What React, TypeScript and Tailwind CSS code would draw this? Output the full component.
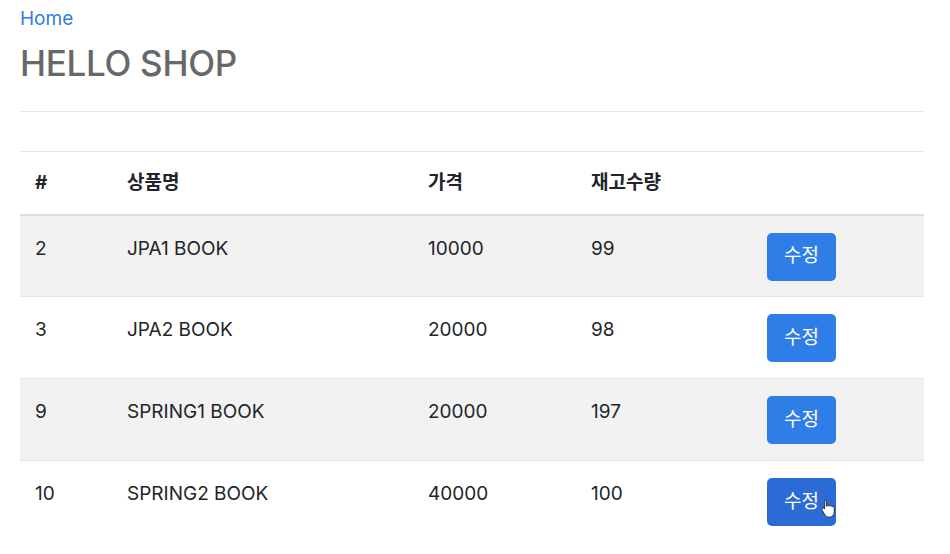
import React from "react";

const rows = [
  { id: "2", name: "JPA1 BOOK", price: "10000", qty: "99" },
  { id: "3", name: "JPA2 BOOK", price: "20000", qty: "98" },
  { id: "9", name: "SPRING1 BOOK", price: "20000", qty: "197" },
  { id: "10", name: "SPRING2 BOOK", price: "40000", qty: "100" },
];

export default function App() {
  return (
    <div
      className="w-[950px] h-[554px] bg-white overflow-hidden text-[#212529]"
      style={{ fontFamily: 'Inter, "Noto Sans CJK KR", sans-serif' }}
    >
      <div className="px-[20px] w-[904px] box-content">
        <div className="pt-[6px] h-[28px] text-[19px] leading-[26px] text-[#2f7be2]">Home</div>
        <h1 className="mt-[14px] text-[35px] leading-[42px] font-medium text-[#66686b] tracking-[-0.3px]">
          HELLO SHOP
        </h1>
        <div className="mt-[27px] border-t border-[#e6e6e6]" />
        <table className="mt-[39px] w-[904px] table-fixed border-collapse">
          <colgroup>
            <col className="w-[92px]" />
            <col className="w-[301px]" />
            <col className="w-[163px]" />
            <col className="w-[176px]" />
            <col className="w-[172px]" />
          </colgroup>
          <thead>
            <tr className="h-[63px] border-t border-[#e4e4e4] border-b-2 border-b-[#e0e0e0]">
              <th className="text-left pl-[15px] text-[19px] font-bold align-middle">#</th>
              <th className="text-left pl-[15px] text-[19px] font-bold align-middle">상품명</th>
              <th className="text-left pl-[15px] text-[19px] font-bold align-middle">가격</th>
              <th className="text-left pl-[15px] text-[19px] font-bold align-middle">재고수량</th>
              <th />
            </tr>
          </thead>
          <tbody>
            {rows.map((r, i) => (
              <tr
                key={r.id}
                className={`h-[82px] ${i < 3 ? "border-b border-[#e4e4e4]" : ""} ${
                  i % 2 === 0 ? "bg-[#f2f2f2]" : "bg-white"
                }`}
              >
                <td className="pl-[15px] align-top pt-[20px] text-[19px] leading-[26px]">{r.id}</td>
                <td className="pl-[15px] align-top pt-[20px] text-[19px] leading-[26px]">{r.name}</td>
                <td className="pl-[15px] align-top pt-[20px] text-[19px] leading-[26px]">{r.price}</td>
                <td className="pl-[15px] align-top pt-[20px] text-[19px] leading-[26px]">{r.qty}</td>
                <td className="pl-[15px] align-top pt-[17px]">
                  <div className="relative inline-block">
                    <button
                      className={`w-[69px] h-[48px] rounded-[5px] text-white text-[19px] ${
                        i === 3 ? "bg-[#2a6bd6]" : "bg-[#2f7ee8]"
                      }`}
                    >
                      수정
                    </button>
                    {i === 3 && (
                      <svg
                        className="absolute left-[54px] top-[20px]"
                        width="16"
                        height="20"
                        viewBox="0 0 16 20"
                      >
                        <path
                          d="M4 1.5c.8 0 1.4.6 1.4 1.4v5.3c.3-.5.8-.8 1.4-.8.7 0 1.2.4 1.4.9.3-.4.8-.7 1.3-.7.7 0 1.3.5 1.4 1.1.3-.2.6-.3 1-.3.8 0 1.4.6 1.4 1.4v4.2c0 2.9-2.2 5.2-5 5.2H8c-1.6 0-3-.8-3.9-2L1.2 12.2c-.5-.7-.3-1.5.3-1.9.6-.4 1.4-.2 1.8.3l.3.4V2.9c0-.8.6-1.4 1.4-1.4z"
                          fill="white"
                          stroke="#333"
                          strokeWidth="1"
                        />
                      </svg>
                    )}
                  </div>
                </td>
              </tr>
            ))}
          </tbody>
        </table>
      </div>
    </div>
  );
}
